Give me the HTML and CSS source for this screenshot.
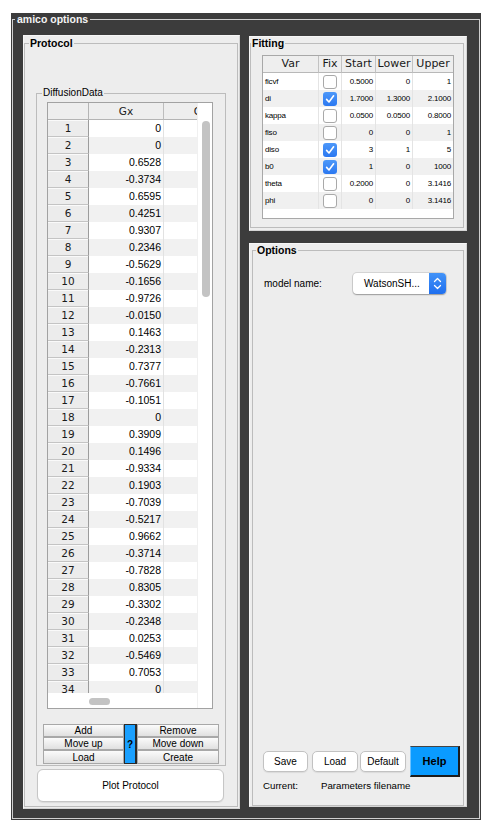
FILE: index.html
```html
<!DOCTYPE html>
<html lang="en">
<head>
<meta charset="utf-8">
<title>amico options</title>
<link rel="stylesheet" href="styles.css">
</head>
<body>
<div class="window">
  <fieldset class="frame">
    <legend class="frame-title">amico options</legend>
    <div class="frame-body">
      <div class="panel panel-protocol">
        <fieldset class="group protocol">
          <legend class="group-title">Protocol</legend>
          <div class="protocol-body">
            <fieldset class="group diffusion">
              <legend class="sub-title">DiffusionData</legend>
              <div class="diff-body">
                <div class="dtable">
                  <div class="dmain">
                    <div class="drow dhead"><div class="rh"></div><div class="c2">Gx</div><div class="c3">Gy</div></div>
                    <div class="dbody">
                      <div class="drow"><div class="rh">1</div><div class="c2">0</div><div class="c3"></div></div>
                      <div class="drow"><div class="rh">2</div><div class="c2">0</div><div class="c3"></div></div>
                      <div class="drow"><div class="rh">3</div><div class="c2">0.6528</div><div class="c3"></div></div>
                      <div class="drow"><div class="rh">4</div><div class="c2">-0.3734</div><div class="c3"></div></div>
                      <div class="drow"><div class="rh">5</div><div class="c2">0.6595</div><div class="c3"></div></div>
                      <div class="drow"><div class="rh">6</div><div class="c2">0.4251</div><div class="c3"></div></div>
                      <div class="drow"><div class="rh">7</div><div class="c2">0.9307</div><div class="c3"></div></div>
                      <div class="drow"><div class="rh">8</div><div class="c2">0.2346</div><div class="c3"></div></div>
                      <div class="drow"><div class="rh">9</div><div class="c2">-0.5629</div><div class="c3"></div></div>
                      <div class="drow"><div class="rh">10</div><div class="c2">-0.1656</div><div class="c3"></div></div>
                      <div class="drow"><div class="rh">11</div><div class="c2">-0.9726</div><div class="c3"></div></div>
                      <div class="drow"><div class="rh">12</div><div class="c2">-0.0150</div><div class="c3"></div></div>
                      <div class="drow"><div class="rh">13</div><div class="c2">0.1463</div><div class="c3"></div></div>
                      <div class="drow"><div class="rh">14</div><div class="c2">-0.2313</div><div class="c3"></div></div>
                      <div class="drow"><div class="rh">15</div><div class="c2">0.7377</div><div class="c3"></div></div>
                      <div class="drow"><div class="rh">16</div><div class="c2">-0.7661</div><div class="c3"></div></div>
                      <div class="drow"><div class="rh">17</div><div class="c2">-0.1051</div><div class="c3"></div></div>
                      <div class="drow"><div class="rh">18</div><div class="c2">0</div><div class="c3"></div></div>
                      <div class="drow"><div class="rh">19</div><div class="c2">0.3909</div><div class="c3"></div></div>
                      <div class="drow"><div class="rh">20</div><div class="c2">0.1496</div><div class="c3"></div></div>
                      <div class="drow"><div class="rh">21</div><div class="c2">-0.9334</div><div class="c3"></div></div>
                      <div class="drow"><div class="rh">22</div><div class="c2">0.1903</div><div class="c3"></div></div>
                      <div class="drow"><div class="rh">23</div><div class="c2">-0.7039</div><div class="c3"></div></div>
                      <div class="drow"><div class="rh">24</div><div class="c2">-0.5217</div><div class="c3"></div></div>
                      <div class="drow"><div class="rh">25</div><div class="c2">0.9662</div><div class="c3"></div></div>
                      <div class="drow"><div class="rh">26</div><div class="c2">-0.3714</div><div class="c3"></div></div>
                      <div class="drow"><div class="rh">27</div><div class="c2">-0.7828</div><div class="c3"></div></div>
                      <div class="drow"><div class="rh">28</div><div class="c2">0.8305</div><div class="c3"></div></div>
                      <div class="drow"><div class="rh">29</div><div class="c2">-0.3302</div><div class="c3"></div></div>
                      <div class="drow"><div class="rh">30</div><div class="c2">-0.2348</div><div class="c3"></div></div>
                      <div class="drow"><div class="rh">31</div><div class="c2">0.0253</div><div class="c3"></div></div>
                      <div class="drow"><div class="rh">32</div><div class="c2">-0.5469</div><div class="c3"></div></div>
                      <div class="drow"><div class="rh">33</div><div class="c2">0.7053</div><div class="c3"></div></div>
                      <div class="drow"><div class="rh">34</div><div class="c2">0</div><div class="c3"></div></div>
                    </div>
                    <div class="hscroll"><div class="hthumb"></div></div>
                  </div>
                  <div class="vscroll"><div class="vthumb"></div></div>
                </div>
                <div class="btngrid">
                  <button class="gbtn">Add</button>
                  <button class="qbtn">?</button>
                  <button class="gbtn">Remove</button>
                  <button class="gbtn">Move up</button>
                  <button class="gbtn">Move down</button>
                  <button class="gbtn">Load</button>
                  <button class="gbtn">Create</button>
                </div>
              </div>
            </fieldset>
            <button class="plot">Plot Protocol</button>
          </div>
        </fieldset>
      </div>

      <div class="rightcol">
        <div class="panel panel-fitting">
          <fieldset class="group fitting">
            <legend class="group-title fit-title">Fitting</legend>
            <div class="fit-body">
              <div class="ftable">
                <div class="frow fhead"><div>Var</div><div>Fix</div><div>Start</div><div>Lower</div><div>Upper</div></div>
                <div class="frow"><div class="fv">ficvf</div><div class="fx"><span class="cb"></span></div><div>0.5000</div><div>0</div><div>1</div></div>
                <div class="frow"><div class="fv">di</div><div class="fx"><span class="cb on"><svg viewBox="0 0 14 14" width="14" height="14"><path d="M3.6 7.4 L6 10 L10.6 3.8" fill="none" stroke="#fff" stroke-width="1.6" stroke-linecap="round" stroke-linejoin="round"/></svg></span></div><div>1.7000</div><div>1.3000</div><div>2.1000</div></div>
                <div class="frow"><div class="fv">kappa</div><div class="fx"><span class="cb"></span></div><div>0.0500</div><div>0.0500</div><div>0.8000</div></div>
                <div class="frow"><div class="fv">fiso</div><div class="fx"><span class="cb"></span></div><div>0</div><div>0</div><div>1</div></div>
                <div class="frow"><div class="fv">diso</div><div class="fx"><span class="cb on"><svg viewBox="0 0 14 14" width="14" height="14"><path d="M3.6 7.4 L6 10 L10.6 3.8" fill="none" stroke="#fff" stroke-width="1.6" stroke-linecap="round" stroke-linejoin="round"/></svg></span></div><div>3</div><div>1</div><div>5</div></div>
                <div class="frow"><div class="fv">b0</div><div class="fx"><span class="cb on"><svg viewBox="0 0 14 14" width="14" height="14"><path d="M3.6 7.4 L6 10 L10.6 3.8" fill="none" stroke="#fff" stroke-width="1.6" stroke-linecap="round" stroke-linejoin="round"/></svg></span></div><div>1</div><div>0</div><div>1000</div></div>
                <div class="frow"><div class="fv">theta</div><div class="fx"><span class="cb"></span></div><div>0.2000</div><div>0</div><div>3.1416</div></div>
                <div class="frow"><div class="fv">phi</div><div class="fx"><span class="cb"></span></div><div>0</div><div>0</div><div>3.1416</div></div>
              </div>
            </div>
          </fieldset>
        </div>

        <div class="panel panel-options">
          <fieldset class="group options">
            <legend class="group-title opt-title">Options</legend>
            <div class="opt-body">
              <div class="model-row">
                <span class="model-label">model name:</span>
                <div class="popup">
                  <span class="popup-text">WatsonSH...</span>
                  <span class="popup-arrow"><svg viewBox="0 0 17 21" width="17" height="21"><path d="M5.5 8.5 L8.5 5.5 L11.5 8.5 M5.5 12.5 L8.5 15.5 L11.5 12.5" fill="none" stroke="#fff" stroke-width="1.3" stroke-linecap="round" stroke-linejoin="round"/></svg></span>
                </div>
              </div>
              <div class="btn-row">
                <button class="mbtn w-save">Save</button>
                <button class="mbtn w-load">Load</button>
                <button class="mbtn w-default">Default</button>
                <button class="help">Help</button>
              </div>
              <div class="current-row">
                <span class="current-label">Current:</span>
                <span>Parameters filename</span>
              </div>
            </div>
          </fieldset>
        </div>
      </div>
    </div>
  </fieldset>
</div>
</body>
</html>
```

FILE: styles.css
```css
* { box-sizing: border-box; }
html, body { margin: 0; padding: 0; background: #ffffff; }
body { font-family: "Liberation Sans", Arial, sans-serif; font-size: 10px; color: #000; }
button { font-family: "Liberation Sans", Arial, sans-serif; color: #000; margin: 0; padding: 0; }

.window {
  margin: 13px 0 0 11px;
  width: 470px;
  height: 807px;
  background: #3c3c3c;
  padding: 0 1px 1px;
}
.frame {
  margin: 0;
  padding: 0;
  border: 1px solid #cfcfcf;
  height: 806px;
  min-width: 0;
}
.frame-title {
  margin-left: 2px;
  padding: 0 2px;
  font: bold 10.5px/12px "Liberation Sans", Arial, sans-serif;
  color: #f4f4f4;
}
.frame-body {
  display: flex;
  gap: 9px;
  padding: 10px 12px 0 10px;
}

.panel {
  background: #ededed;
  border: 1px solid #f6f6f6;
  border-right-color: #d4d4d4;
  border-bottom-color: #d4d4d4;
}
.group {
  margin: 0;
  padding: 0;
  border: 1px solid #bcbcbc;
  min-width: 0;
}
.group-title {
  margin-left: 4px;
  padding: 0 1px;
  font: bold 10.5px/12px "Liberation Sans", Arial, sans-serif;
  color: #000;
}
.sub-title {
  margin-left: 5px;
  padding: 0 1px;
  font: 10px/12px "Liberation Sans", Arial, sans-serif;
}

/* ---------- Protocol ---------- */
.panel-protocol {
  width: 217px;
  height: 774px;
  padding: 1px 1px 0 0;
}
.protocol { margin-right: 0; }
.protocol-body { padding: 38px 11px 4px 11px; }
.diff-body { padding: 3px 0 1px 0; }

.dtable {
  display: flex;
  width: 166px;
  height: 607px;
  margin-left: 10px;
  border: 1px solid #a2a2a2;
  background: #ffffff;
}
.dmain {
  width: 149px;
  display: flex;
  flex-direction: column;
  overflow: hidden;
}
.drow { display: flex; height: 17px; flex: none; }
.rh {
  width: 41px;
  flex: none;
  text-align: center;
  background: #ececec;
  border-right: 1px solid #9c9c9c;
  border-bottom: 1px solid #c4c4c4;
  box-shadow: inset 0 1px 0 #fafafa;
  font: 10.5px/16px "DejaVu Sans", sans-serif;
  color: #1a1a1a;
}
.c2 {
  width: 74px;
  flex: none;
  text-align: right;
  padding-right: 2px;
  font: 10.5px/17px "Liberation Sans", Arial, sans-serif;
}
.c3 {
  width: 75px;
  flex: none;
  border-left: 1px solid #e2e2e2;
}
.dbody .drow:nth-child(even) .c2,
.dbody .drow:nth-child(even) .c3 { background: #f1f1f1; }

.dhead .rh { background: #eeeeee; border-bottom-color: #b4b4b4; box-shadow: none; border-right-color: #b4b4b4; }
.dhead .c2,
.dhead .c3 {
  background: #eeeeee;
  border-bottom: 1px solid #b4b4b4;
  text-align: center;
  padding: 0;
  font: 10.5px/16px "DejaVu Sans", sans-serif;
  color: #1a1a1a;
}
.dhead .c3 { border-left: 1px solid #bdbdbd; }

.dbody { height: 573px; overflow: hidden; flex: none; }
.hscroll { height: 15px; flex: none; padding: 5px 0 0 41px; background: #ffffff; }
.hthumb { width: 21px; height: 7px; border-radius: 4px; background: #c3c3c3; }
.vscroll { width: 15px; padding: 18px 0 0 4px; background: #ffffff; border-left: 1px solid #f0f0f0; }
.vthumb { width: 8px; height: 176px; border-radius: 4px; background: #c3c3c3; }

.btngrid {
  display: grid;
  grid-template-columns: 81px 13px 82px;
  grid-template-rows: 13px 13px 14px;
  margin: 15px 0 0 6px;
  width: 176px;
  height: 40px;
}
.gbtn {
  font-size: 10px;
  line-height: 11px;
  background: linear-gradient(#fbfbfb, #e0e0e0);
  border: 1px solid #a8a8a8;
}
.qbtn {
  grid-row: 1 / 4;
  grid-column: 2;
  background: #1aa0ff;
  border: 1px solid #2a2a2a;
  border-right-width: 2px;
  font-size: 10px;
  font-weight: bold;
}
.plot {
  display: block;
  margin: 3px 0 0 1px;
  width: 187px;
  height: 33px;
  background: #ffffff;
  border: 1px solid #c6c6c6;
  border-radius: 6px;
  box-shadow: 0 1px 1px rgba(0,0,0,0.08);
  font-size: 10px;
}

/* ---------- Right column ---------- */
.rightcol {
  width: 218px;
  display: flex;
  flex-direction: column;
}
.panel-fitting {
  margin-top: 1px;
  height: 195px;
  padding: 0 2px 0 0;
}
.fit-title { margin-left: 0; }
.fit-body { padding: 6px 0 8px 11px; }

.ftable {
  width: 192px;
  height: 164px;
  border: 1px solid #a8a8a8;
  background: #ffffff;
}
.frow {
  display: grid;
  grid-template-columns: 56px 23px 34px 37px 40px;
  height: 17px;
}
.frow > div {
  border-right: 1px solid #e4e4e4;
  text-align: right;
  padding-right: 2px;
  font: 8px/17px "Liberation Sans", Arial, sans-serif;
  letter-spacing: -0.2px;
  overflow: hidden;
  white-space: nowrap;
}
.frow > div:last-child { border-right: none; }
.frow:nth-child(odd):not(.fhead) { background: #f0f0f0; }
.frow > .fv { text-align: left; padding: 0 0 0 2px; }
.frow > .fx { padding: 0; display: flex; align-items: center; justify-content: center; }
.fhead { background: #eeeeee; }
.fhead > div {
  text-align: center;
  padding: 0;
  font: 11px/16px "DejaVu Sans", sans-serif;
  letter-spacing: 0;
  color: #1a1a1a;
  border-right: 1px solid #c2c2c2;
  border-bottom: 1px solid #b8b8b8;
}
.cb {
  display: block;
  width: 14px;
  height: 14px;
  border-radius: 3px;
  border: 1px solid #a9a9a9;
  background: #ffffff;
}
.cb.on {
  border: none;
  background: linear-gradient(#4d98f9, #2b78f1);
}
.cb svg { display: block; }

.panel-options {
  margin-top: 12px;
  height: 564px;
  padding: 0 2px 0 2px;
}
.opt-title { margin-left: 3px; }
.opt-body {
  height: 549px;
  display: flex;
  flex-direction: column;
  padding: 17px 0 13px 0;
}
.model-row {
  display: flex;
  align-items: center;
  padding-left: 11px;
  height: 21px;
}
.model-label { width: 89px; font-size: 10px; }
.popup {
  display: flex;
  width: 93px;
  height: 21px;
  border-radius: 4px;
  background: #ffffff;
  overflow: hidden;
  box-shadow: 0 0 0 1px rgba(0,0,0,0.10), 0 1px 1.5px rgba(0,0,0,0.28);
}
.popup-text { flex: 1; padding-left: 11px; font: 10px/21px "Liberation Sans", Arial, sans-serif; }
.popup-arrow {
  width: 17px;
  background: linear-gradient(#4293f8, #1f6fef);
  display: flex;
}
.popup-arrow svg { display: block; }

.btn-row {
  margin-top: auto;
  display: flex;
  align-items: center;
  height: 31px;
  padding-left: 10px;
}
.mbtn {
  height: 21px;
  background: #ffffff;
  border: 1px solid #c2c2c2;
  border-radius: 5px;
  box-shadow: 0 1px 1px rgba(0,0,0,0.08);
  font-size: 10px;
}
.w-save { width: 45px; margin-right: 4px; }
.w-load { width: 46px; margin-right: 2px; }
.w-default { width: 46px; margin-right: 4px; }
.help {
  width: 50px;
  height: 31px;
  background: #0a9bff;
  border: 1px solid #444;
  border-left-color: #6cc2ff;
  border-right: 2px solid #1c1c1c;
  border-bottom: 2px solid #1c1c1c;
  font: bold 11px/1 "Liberation Sans", Arial, sans-serif;
}
.current-row {
  margin-top: 3px;
  padding-left: 10px;
  display: flex;
  font: 9.7px/12px "Liberation Sans", Arial, sans-serif;
}
.current-label { width: 58px; }
```
